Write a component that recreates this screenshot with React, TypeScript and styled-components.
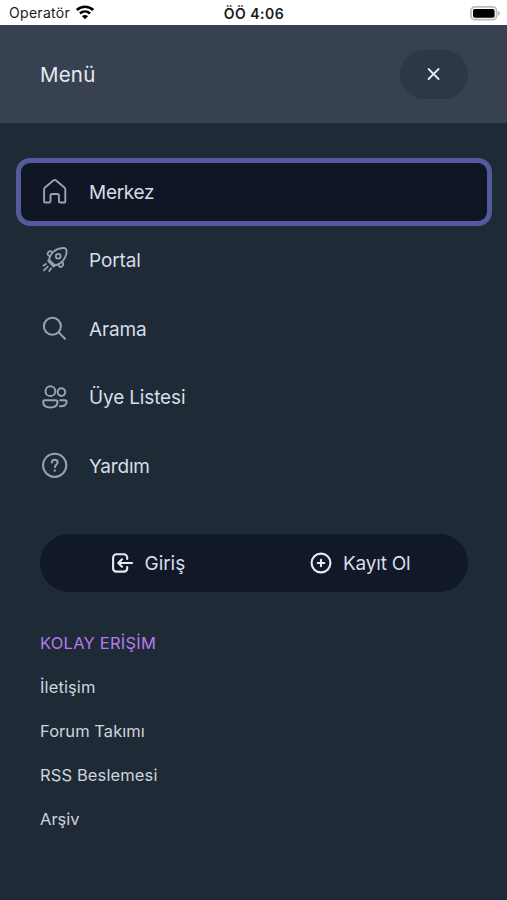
import React from "react";
import styled, { createGlobalStyle } from "styled-components";

const GlobalStyle = createGlobalStyle`
  * { box-sizing: border-box; }
  body { margin: 0; background: #1f2a37; }
  button { font: inherit; color: inherit; border: 0; padding: 0; margin: 0; }
  svg { display: block; flex: none; fill: none; stroke: currentColor; stroke-linecap: round; stroke-linejoin: round; }
`;

const Screen = styled.div`
  height: 900px;
  overflow: hidden;
  display: flex;
  flex-direction: column;
  background: #1f2a37;
  color: #d6dde8;
  font-family: Inter, "Liberation Sans", sans-serif;
`;

const StatusBar = styled.div`
  height: 25px;
  flex: none;
  display: grid;
  grid-template-columns: 1fr auto 1fr;
  align-items: center;
  padding: 2px 6px 0 9px;
  background: #fff;
  color: #1a1a1a;
  font-size: 14px;
`;

const Carrier = styled.div`
  display: flex;
  align-items: center;
  gap: 5px;
  svg { margin-top: -2px; color: #000; }
`;

const Clock = styled.div`
  font-weight: 600;
  letter-spacing: 0.5px;
  margin-left: -2px;
`;

const Battery = styled.div`
  justify-self: end;
`;

const Label = styled.span<{ $size: number; $spacing?: number }>`
  font-size: ${(p) => p.$size}px;
  letter-spacing: ${(p) => p.$spacing ?? 0}px;
  line-height: 1.2;
  white-space: nowrap;
`;

const Header = styled.header`
  height: 98px;
  flex: none;
  display: flex;
  align-items: center;
  justify-content: space-between;
  padding: 0 39px 0 40px;
  background: #374151;
  color: #e5eaf2;
  ${Label} { padding-top: 2px; }
`;

const CloseButton = styled.button`
  width: 68px;
  height: 49px;
  border-radius: 25px;
  display: grid;
  place-items: center;
  background: #2d3745;
`;

const Nav = styled.nav`
  display: flex;
  flex-direction: column;
  gap: 0.5px;
  margin: 34.5px 15px 0 16px;
`;

const NavItem = styled.a<{ $active?: boolean }>`
  height: 68px;
  display: flex;
  align-items: center;
  gap: 20px;
  padding-left: 20px;
  border: 5px solid ${(p) => (p.$active ? "#555a9c" : "transparent")};
  border-radius: 14px;
  background: ${(p) => (p.$active ? "#111625" : "transparent")};
  svg { color: #98a2b0; }
  ${Label} { padding-top: 3px; }
`;

const Actions = styled.div`
  height: 58px;
  margin: 34.5px 39px 0 40px;
  border-radius: 29px;
  display: grid;
  grid-template-columns: 215px 213px;
  background: #111827;
`;

const Action = styled.button<{ $indent: number }>`
  display: flex;
  align-items: center;
  gap: 10.5px;
  padding-left: ${(p) => p.$indent}px;
  background: transparent;
  svg { color: #e5eaf4; }
  ${Label} { padding-top: 2px; }
`;

const QuickLinks = styled.div`
  margin: 30px 40px 0;
  display: flex;
  flex-direction: column;
`;

const QuickRow = styled.div<{ $heading?: boolean }>`
  height: 44px;
  display: flex;
  align-items: center;
  color: ${(p) => (p.$heading ? "#b57bee" : "#cdd4de")};
`;

const HomeIcon = () => (
  <svg width="28" height="28" viewBox="0 0 28 28" strokeWidth="1.9">
    <path d="M3.1 11.2c0-.8.3-1.3.9-1.8l8.3-6.9c.9-.7 1.9-.7 2.8 0l8.3 6.9c.6.5.9 1 .9 1.8v11.7c0 1-.6 1.6-1.6 1.6H19.2c-.8 0-1.3-.5-1.3-1.3v-5.6c0-1-.6-1.6-1.6-1.6h-5.2c-1 0-1.6.6-1.6 1.6v5.6c0 .8-.5 1.3-1.3 1.3H4.7c-1 0-1.6-.6-1.6-1.6z" />
  </svg>
);

const RocketIcon = () => (
  <svg width="28" height="28" viewBox="0 0 28 28" strokeWidth="1.8">
    <path d="M8.2 13.8C9 7.4 14.4 2.5 21.8 2c2.8-.2 4 1 3.8 3.8C25 13 20.2 18.4 13.8 19.4z" />
    <circle cx="17.2" cy="10.2" r="2.4" />
    <path d="M11.6 6.6C9.9 4.7 8.6 4.8 7.3 6.3c-1.4 1.6-1 3 1.8 4.1M21 16c1.7 1.7 1.7 2.9.2 4.3-1.6 1.3-3 1-4-1.8M8.2 13.8l-1.1 1.1 5.6 5.6 1.1-1.1" />
    <path d="m5 18-2.5 1.6M6.8 20.6l-3.9 3.8M10.2 22.4l-2 2.6" />
  </svg>
);

const SearchIcon = () => (
  <svg width="28" height="28" viewBox="0 0 28 28" strokeWidth="2">
    <circle cx="11.4" cy="11.2" r="8.5" />
    <path d="m17.7 17.4 6.3 6.4" />
  </svg>
);

const UsersIcon = () => (
  <svg width="28" height="28" viewBox="0 0 28 28" strokeWidth="2">
    <circle cx="9.4" cy="8.2" r="4.9" />
    <circle cx="20.4" cy="9.1" r="3.8" />
    <path d="M4 17.2h10.8c1.1 0 1.7.6 1.7 1.6 0 3.7-2.8 5.7-7.1 5.7s-7.2-2-7.2-5.7c0-1 .7-1.6 1.8-1.6zM19.2 17.2h4.7c1.1 0 1.7.6 1.7 1.5 0 3.5-2.7 4.9-6.7 4.6" />
  </svg>
);

const HelpIcon = () => (
  <svg width="28" height="28" viewBox="0 0 28 28" strokeWidth="2">
    <circle cx="13.7" cy="13.3" r="11.6" />
    <path d="M10.8 10.6c.1-1.8 1.2-2.8 2.9-2.8 1.8 0 2.9 1.1 2.9 2.6 0 2.4-2.7 2.3-2.7 4.9" />
    <circle cx="13.8" cy="18.6" r="1.2" fill="currentColor" stroke="none" />
  </svg>
);

const LoginIcon = () => (
  <svg width="24" height="24" viewBox="0 0 24 24" strokeWidth="2.1">
    <path d="M17.2 8V6.6c0-2-1.5-3.3-3.5-3.3H6.6c-2 0-3.5 1.4-3.5 3.4v10.5c0 2 1.5 3.4 3.5 3.4h7.1c2 0 3.5-1.4 3.5-3.4V16" />
    <path d="M22.1 12H8.5M12 8.3 8.3 12l3.7 3.7" />
  </svg>
);

const PlusIcon = () => (
  <svg width="24" height="24" viewBox="0 0 24 24" strokeWidth="2.1">
    <circle cx="12" cy="12" r="9.4" />
    <path d="M12 8.7v6.6M8.7 12h6.6" />
  </svg>
);

const CloseIcon = () => (
  <svg width="14" height="14" viewBox="0 0 14 14" strokeWidth="1.8">
    <path d="m1.6 2 10 10M11.6 2l-10 10" />
  </svg>
);

const WifiIcon = () => (
  <svg width="20" height="15" viewBox="0 0 20 15" strokeWidth="2.7">
    <path d="M1.8 5.1c4.7-4.5 11.7-4.5 16.4 0M5 8.5c2.9-2.7 7.1-2.7 10 0" strokeLinecap="butt" />
    <path d="M10 14.3 7 11.2c1.6-1.6 4.4-1.6 6 0z" fill="currentColor" stroke="none" />
  </svg>
);

const BatteryIcon = () => (
  <svg width="31" height="15" viewBox="0 0 31 15">
    <rect x="1" y="0.9" width="25.6" height="12.8" rx="3.8" stroke="#bdbdbd" strokeWidth="1.8" />
    <rect x="3" y="2.9" width="21.6" height="8.8" rx="1.8" fill="#000" stroke="none" />
    <path d="M28.1 5c2.3.8 2.3 4 0 4.8z" fill="#aaa" stroke="none" />
  </svg>
);

const navigation = [
  { label: "Merkez", icon: <HomeIcon />, active: true, spacing: -0.28 },
  { label: "Portal", icon: <RocketIcon />, spacing: -0.1 },
  { label: "Arama", icon: <SearchIcon />, spacing: -0.15 },
  { label: "Üye Listesi", icon: <UsersIcon />, spacing: -0.15 },
  { label: "Yardım", icon: <HelpIcon />, spacing: -0.2 },
];

const quickLinks = [
  { label: "İletişim", spacing: 0.12 },
  { label: "Forum Takımı", spacing: 0.05 },
  { label: "RSS Beslemesi", spacing: 0.12 },
  { label: "Arşiv", spacing: 0 },
];

export default function App() {
  return (
    <Screen lang="tr">
      <GlobalStyle />
      <StatusBar>
        <Carrier>
          <Label $size={14} $spacing={0.3}>Operatör</Label>
          <WifiIcon />
        </Carrier>
        <Clock>ÖÖ 4:06</Clock>
        <Battery>
          <BatteryIcon />
        </Battery>
      </StatusBar>
      <Header>
        <Label $size={20.5} $spacing={0.2}>Menü</Label>
        <CloseButton aria-label="Kapat">
          <CloseIcon />
        </CloseButton>
      </Header>
      <Nav>
        {navigation.map((item) => (
          <NavItem key={item.label} $active={item.active}>
            {item.icon}
            <Label $size={19} $spacing={item.spacing}>{item.label}</Label>
          </NavItem>
        ))}
      </Nav>
      <Actions>
        <Action $indent={70}>
          <LoginIcon />
          <Label $size={19} $spacing={-0.05}>Giriş</Label>
        </Action>
        <Action $indent={53.5}>
          <PlusIcon />
          <Label $size={19} $spacing={-0.2}>Kayıt Ol</Label>
        </Action>
      </Actions>
      <QuickLinks>
        <QuickRow $heading>
          <Label $size={16.5} $spacing={0.22}>KOLAY ERİŞİM</Label>
        </QuickRow>
        {quickLinks.map((link) => (
          <QuickRow key={link.label}>
            <Label $size={16.5} $spacing={link.spacing}>{link.label}</Label>
          </QuickRow>
        ))}
      </QuickLinks>
    </Screen>
  );
}
